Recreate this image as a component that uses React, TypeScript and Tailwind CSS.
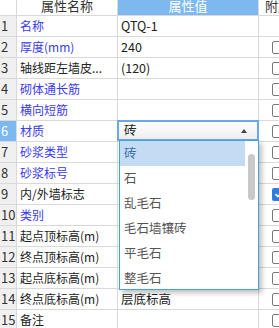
import React from "react";

const rows: { n: number; name: string; blue: boolean; value?: string; check: "none" | "off" | "on" }[] = [
  { n: 1, name: "名称", blue: true, value: "QTQ-1", check: "none" },
  { n: 2, name: "厚度(mm)", blue: true, value: "240", check: "off" },
  { n: 3, name: "轴线距左墙皮...", blue: false, value: "(120)", check: "off" },
  { n: 4, name: "砌体通长筋", blue: true, check: "off" },
  { n: 5, name: "横向短筋", blue: true, check: "off" },
  { n: 6, name: "材质", blue: true, check: "off" },
  { n: 7, name: "砂浆类型", blue: true, check: "off" },
  { n: 8, name: "砂浆标号", blue: true, check: "off" },
  { n: 9, name: "内/外墙标志", blue: false, check: "on" },
  { n: 10, name: "类别", blue: true, check: "off" },
  { n: 11, name: "起点顶标高(m)", blue: false, check: "off" },
  { n: 12, name: "终点顶标高(m)", blue: false, check: "off" },
  { n: 13, name: "起点底标高(m)", blue: false, check: "off" },
  { n: 14, name: "终点底标高(m)", blue: false, value: "层底标高", check: "off" },
  { n: 15, name: "备注", blue: false, check: "off" },
];

const options = ["砖", "石", "乱毛石", "毛石墙镶砖", "平毛石", "整毛石"];

function CheckBox({ on }: { on: boolean }) {
  if (on) {
    return (
      <div className="w-[13px] h-[13px] rounded-[2px] bg-[#2f7de1] flex items-center justify-center">
        <svg width="10" height="10" viewBox="0 0 10 10">
          <path d="M1.5 5.2 L4 7.5 L8.5 2.5" stroke="#fff" strokeWidth="1.6" fill="none" />
        </svg>
      </div>
    );
  }
  return <div className="w-[13px] h-[13px] rounded-[2px] border border-[#7a7a7a] bg-white" />;
}

export default function App() {
  return (
    <div
      className="w-[279px] h-[328px] overflow-hidden bg-white text-[12px] text-[#222]"
      style={{ fontFamily: '"Microsoft YaHei", "Noto Sans CJK SC", "Noto Sans", sans-serif' }}
    >
      {/* header */}
      <div className="flex h-[16px] border-b border-[#d9d9d9] leading-[14px]">
        <div className="w-[17px] shrink-0 border-r border-[#d9d9d9] bg-white" />
        <div className="w-[101px] shrink-0 border-r border-[#d9d9d9] flex justify-center items-start text-[13px] text-[#333]">
          <span className="-mt-[1px]">属性名称</span>
        </div>
        <div className="w-[141px] shrink-0 border-r border-[#d9d9d9] bg-[#7db8ef] flex justify-center items-start text-[13px] text-white">
          <span className="-mt-[1px]">属性值</span>
        </div>
        <div className="flex-1 pl-[6px] text-[13px] text-[#333] whitespace-nowrap overflow-hidden">
          <span className="-mt-[1px] block">附加</span>
        </div>
      </div>
      {rows.map((r) => (
        <div key={r.n} className="flex h-[21px] border-b border-[#d9d9d9]">
          <div
            className={`w-[17px] shrink-0 border-r border-[#d9d9d9] flex items-center pl-[1px] text-[13px] ${
              r.n === 6 ? "bg-[#7db8ef] text-white" : "bg-[#f0f0f0] text-[#333]"
            }`}
          >
            {r.n}
          </div>
          <div
            className={`w-[101px] shrink-0 border-r border-[#d9d9d9] flex items-center pl-[3px] whitespace-nowrap overflow-hidden text-[12px] ${
              r.blue ? "text-[#3a3af0]" : "text-[#222]"
            }`}
          >
            {r.name}
          </div>
          <div className="w-[141px] shrink-0 border-r border-[#d9d9d9] relative flex items-center pl-[3px] text-[12.5px] text-[#222]">
            {r.value}
            {r.n === 6 && (
              <>
                <div className="absolute -left-[1px] -top-[1px] w-[142px] h-[21px] border-2 border-[#68aae9] bg-gradient-to-b from-white to-[#eeeeee] flex items-center pl-[5px] pr-[10px] justify-between">
                  <span className="text-[12.5px] text-[#222]">砖</span>
                  <svg width="6" height="4" viewBox="0 0 6 4">
                    <path d="M0 4 L3 0 L6 4 Z" fill="#444" />
                  </svg>
                </div>
                <div className="absolute left-[1px] top-[19px] z-10 w-[140px] h-[150px] border border-[#3fa6d8] bg-white shadow-[3px_3px_5px_rgba(0,0,0,0.25)] flex">
                  <div className="flex-1 flex flex-col">
                    {options.map((o, i) => (
                      <div
                        key={o}
                        className={`h-[25px] shrink-0 flex items-center pl-[4px] text-[12.5px] ${
                          i === 0 ? "bg-[#c4dcf3] text-[#3a6fb0]" : "text-[#555]"
                        }`}
                      >
                        {o}
                      </div>
                    ))}
                  </div>
                  <div className="w-[13px] shrink-0 flex justify-center pt-[13px]">
                    <div className="w-[7px] h-[46px] rounded-full bg-[#c9c9c9]" />
                  </div>
                </div>
              </>
            )}
          </div>
          <div className="flex-1 flex items-center pl-[13px]">
            {r.check !== "none" && <CheckBox on={r.check === "on"} />}
          </div>
        </div>
      ))}
    </div>
  );
}
